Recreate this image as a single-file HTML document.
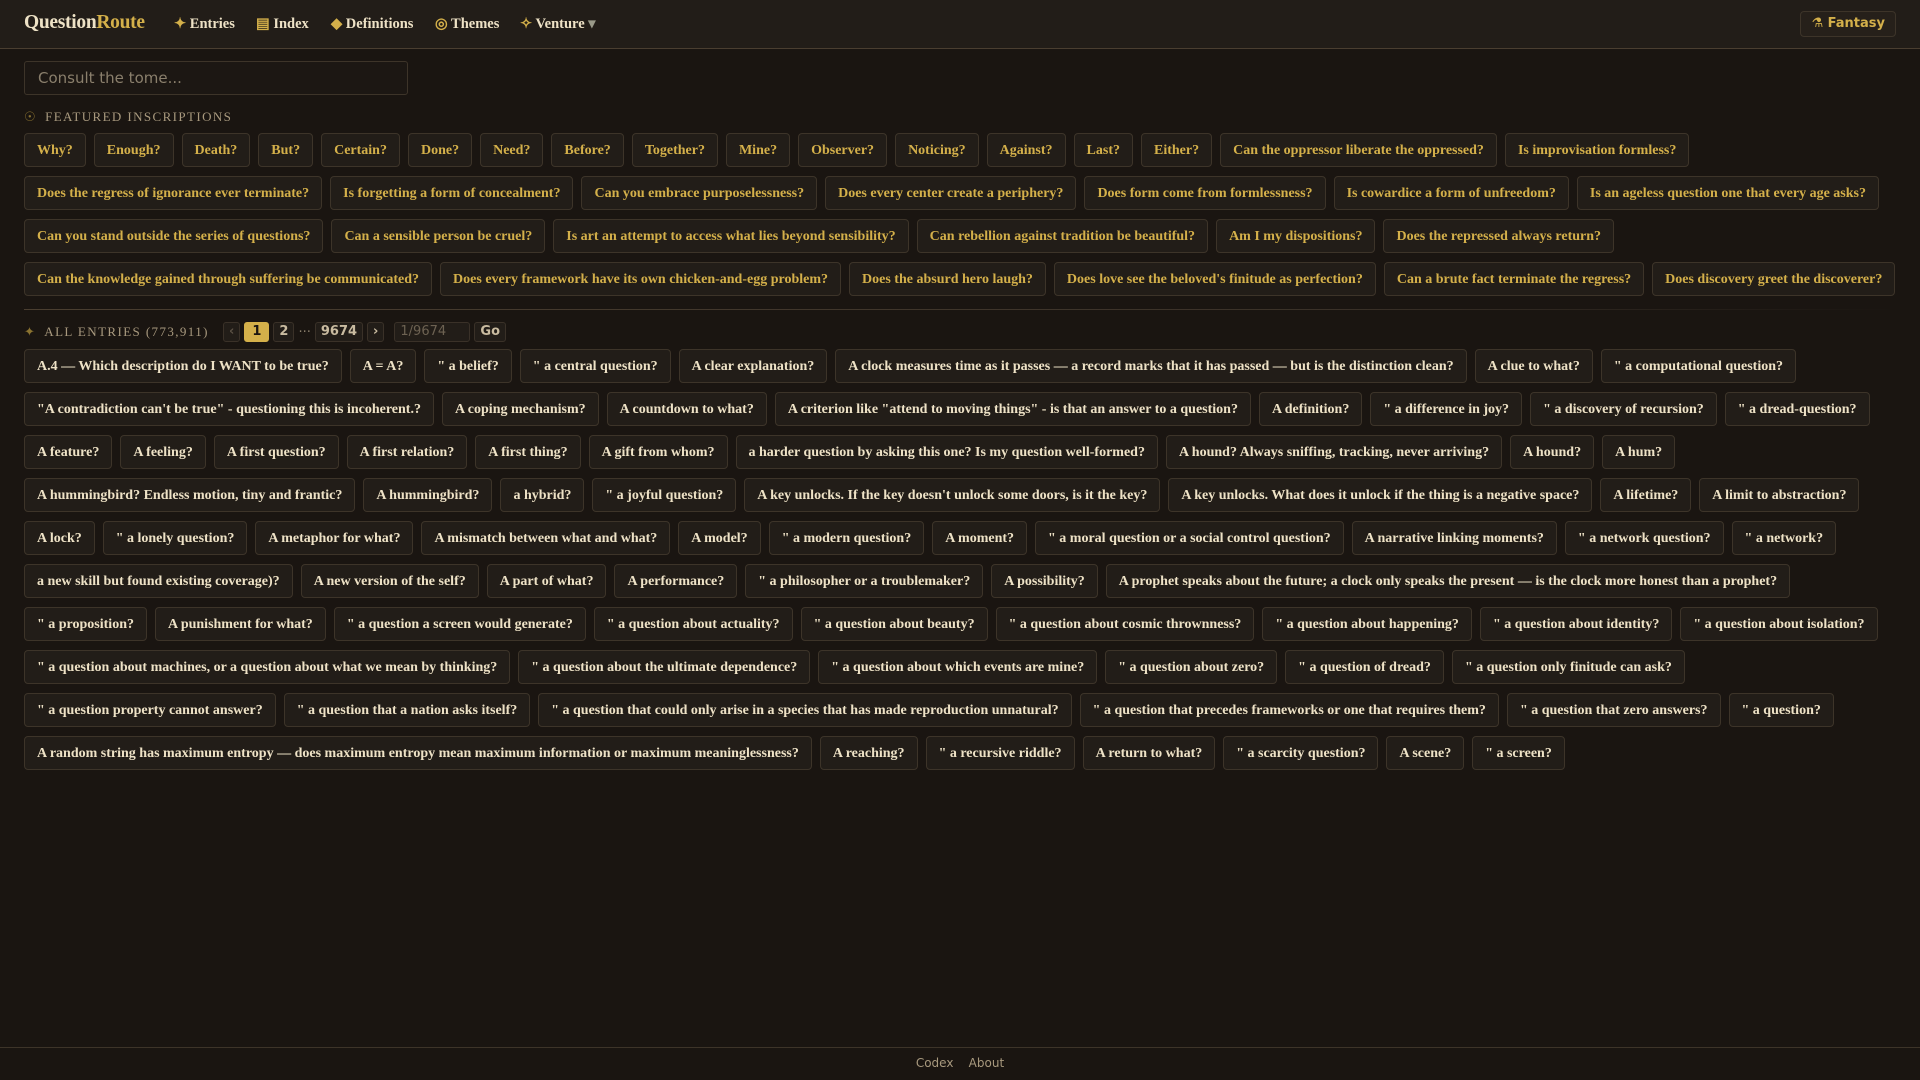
<!DOCTYPE html>
<html><head><meta charset="utf-8"><style>
*{box-sizing:border-box;margin:0;padding:0}
body{width:1920px;height:1080px;background:#1a1511;color:#e8dcc0;font-family:"Liberation Serif",serif;overflow:hidden;position:relative}
.nav{height:49px;background:#221d18;border-bottom:1px solid #4a3e30;position:relative}
.logo{position:absolute;left:24px;top:12px;font-size:19.5px;font-weight:bold;color:#eee2c6;letter-spacing:-0.3px}
.logo span{color:#d4b04a}
.nav a{position:absolute;top:16px;font-size:14.5px;font-weight:bold;color:#eee2c6;text-decoration:none;white-space:nowrap}
.nav a i{font-style:normal;color:#d4b04a}
.fant{position:absolute;right:24px;top:11px;height:26px;padding:0 10px;border:1px solid #3d3429;border-radius:4px;background:#26201a;color:#d4b04a;font:bold 13px "DejaVu Sans",sans-serif;line-height:24px}
.search{position:absolute;left:24px;top:61px;width:384px;height:34px;border:1px solid #3d3429;border-radius:3px;background:#1c1713;color:#8a7f6c;font:15px "DejaVu Sans",sans-serif;padding:7px 13px}
.h{position:absolute;left:24px;font-family:"Liberation Serif",serif;font-size:13px;letter-spacing:1.4px;color:#a8997e}
.h i{font-style:normal;color:#8a7230;margin-right:8px}
.rows{position:absolute;left:24px;width:1880px}
.row{display:flex;gap:8px;margin-bottom:9px;white-space:nowrap}
.b{height:34px;line-height:34px;padding:0 12px;border:1px solid #3d3429;border-radius:4px;background:#221d18;font-size:14px;font-weight:bold;color:#eee2c6}
.f .b{color:#d4b04a}
.div{position:absolute;left:24px;top:309px;width:1872px;height:1px;background:linear-gradient(90deg,#4a3e30,#3a3128 70%,transparent)}
.pg{position:absolute;left:223px;top:322px;display:flex;gap:4px;align-items:center;font:bold 13px "DejaVu Sans",sans-serif}
.pg span{height:20px;line-height:18px;padding:0 5px;border:1px solid #3a3128;border-radius:3px;background:#221d18;color:#c9bba0}
.pg .on{background:#d4b04a;color:#1a1511;border-color:#d4b04a;padding:0 7px}
.pg .in{width:76px;color:#6d6252;font-weight:normal;margin-left:6px}
.foot{position:absolute;left:0;top:1047px;width:1920px;height:33px;border-top:1px solid #3d3429;text-align:center;font:12px "DejaVu Sans",sans-serif;color:#a8997e;line-height:31px}
</style></head><body>
<div class="nav"><div class="logo">Question<span>Route</span></div>
<a style="left:174px"><i>✦</i> Entries</a><a style="left:256px"><i>▤</i> Index</a><a style="left:331px"><i>◆</i> Definitions</a><a style="left:435px"><i>◎</i> Themes</a><a style="left:520px"><i>✧</i> Venture <i style="color:#998">▾</i></a></div>
<div class="fant">⚗ Fantasy</div>
<div class="search">Consult the tome...</div>
<div class="h" style="top:109px"><i>☉</i>FEATURED INSCRIPTIONS</div>
<div class="rows f" style="top:133px">
<div class="row"><div class="b">Why?</div><div class="b">Enough?</div><div class="b">Death?</div><div class="b">But?</div><div class="b">Certain?</div><div class="b">Done?</div><div class="b">Need?</div><div class="b">Before?</div><div class="b">Together?</div><div class="b">Mine?</div><div class="b">Observer?</div><div class="b">Noticing?</div><div class="b">Against?</div><div class="b">Last?</div><div class="b">Either?</div><div class="b">Can the oppressor liberate the oppressed?</div><div class="b">Is improvisation formless?</div></div>
<div class="row"><div class="b">Does the regress of ignorance ever terminate?</div><div class="b">Is forgetting a form of concealment?</div><div class="b">Can you embrace purposelessness?</div><div class="b">Does every center create a periphery?</div><div class="b">Does form come from formlessness?</div><div class="b">Is cowardice a form of unfreedom?</div><div class="b">Is an ageless question one that every age asks?</div></div>
<div class="row"><div class="b">Can you stand outside the series of questions?</div><div class="b">Can a sensible person be cruel?</div><div class="b">Is art an attempt to access what lies beyond sensibility?</div><div class="b">Can rebellion against tradition be beautiful?</div><div class="b">Am I my dispositions?</div><div class="b">Does the repressed always return?</div></div>
<div class="row"><div class="b">Can the knowledge gained through suffering be communicated?</div><div class="b">Does every framework have its own chicken-and-egg problem?</div><div class="b">Does the absurd hero laugh?</div><div class="b">Does love see the beloved's finitude as perfection?</div><div class="b">Can a brute fact terminate the regress?</div><div class="b">Does discovery greet the discoverer?</div></div>
</div>
<div class="div"></div>
<div class="h" style="top:324px"><i>✦</i>ALL ENTRIES (773,911)</div>
<div class="pg"><span style="color:#5a5044">‹</span><span class="on">1</span><span>2</span><b style="color:#8a7f6c;font-weight:normal">···</b><span>9674</span><span>›</span><span class="in">1/9674</span><span>Go</span></div>
<div class="rows" style="top:349px">
<div class="row"><div class="b">A.4 — Which description do I WANT to be true?</div><div class="b">A = A?</div><div class="b">" a belief?</div><div class="b">" a central question?</div><div class="b">A clear explanation?</div><div class="b">A clock measures time as it passes — a record marks that it has passed — but is the distinction clean?</div><div class="b">A clue to what?</div><div class="b">" a computational question?</div></div>
<div class="row"><div class="b">"A contradiction can't be true" - questioning this is incoherent.?</div><div class="b">A coping mechanism?</div><div class="b">A countdown to what?</div><div class="b">A criterion like "attend to moving things" - is that an answer to a question?</div><div class="b">A definition?</div><div class="b">" a difference in joy?</div><div class="b">" a discovery of recursion?</div><div class="b">" a dread-question?</div></div>
<div class="row"><div class="b">A feature?</div><div class="b">A feeling?</div><div class="b">A first question?</div><div class="b">A first relation?</div><div class="b">A first thing?</div><div class="b">A gift from whom?</div><div class="b">a harder question by asking this one? Is my question well-formed?</div><div class="b">A hound? Always sniffing, tracking, never arriving?</div><div class="b">A hound?</div><div class="b">A hum?</div></div>
<div class="row"><div class="b">A hummingbird? Endless motion, tiny and frantic?</div><div class="b">A hummingbird?</div><div class="b">a hybrid?</div><div class="b">" a joyful question?</div><div class="b">A key unlocks. If the key doesn't unlock some doors, is it the key?</div><div class="b">A key unlocks. What does it unlock if the thing is a negative space?</div><div class="b">A lifetime?</div><div class="b">A limit to abstraction?</div></div>
<div class="row"><div class="b">A lock?</div><div class="b">" a lonely question?</div><div class="b">A metaphor for what?</div><div class="b">A mismatch between what and what?</div><div class="b">A model?</div><div class="b">" a modern question?</div><div class="b">A moment?</div><div class="b">" a moral question or a social control question?</div><div class="b">A narrative linking moments?</div><div class="b">" a network question?</div><div class="b">" a network?</div></div>
<div class="row"><div class="b">a new skill but found existing coverage)?</div><div class="b">A new version of the self?</div><div class="b">A part of what?</div><div class="b">A performance?</div><div class="b">" a philosopher or a troublemaker?</div><div class="b">A possibility?</div><div class="b">A prophet speaks about the future; a clock only speaks the present — is the clock more honest than a prophet?</div></div>
<div class="row"><div class="b">" a proposition?</div><div class="b">A punishment for what?</div><div class="b">" a question a screen would generate?</div><div class="b">" a question about actuality?</div><div class="b">" a question about beauty?</div><div class="b">" a question about cosmic thrownness?</div><div class="b">" a question about happening?</div><div class="b">" a question about identity?</div><div class="b">" a question about isolation?</div></div>
<div class="row"><div class="b">" a question about machines, or a question about what we mean by thinking?</div><div class="b">" a question about the ultimate dependence?</div><div class="b">" a question about which events are mine?</div><div class="b">" a question about zero?</div><div class="b">" a question of dread?</div><div class="b">" a question only finitude can ask?</div></div>
<div class="row"><div class="b">" a question property cannot answer?</div><div class="b">" a question that a nation asks itself?</div><div class="b">" a question that could only arise in a species that has made reproduction unnatural?</div><div class="b">" a question that precedes frameworks or one that requires them?</div><div class="b">" a question that zero answers?</div><div class="b">" a question?</div></div>
<div class="row"><div class="b">A random string has maximum entropy — does maximum entropy mean maximum information or maximum meaninglessness?</div><div class="b">A reaching?</div><div class="b">" a recursive riddle?</div><div class="b">A return to what?</div><div class="b">" a scarcity question?</div><div class="b">A scene?</div><div class="b">" a screen?</div></div>
</div>
<div class="foot">Codex &nbsp;&nbsp;&nbsp;About</div>
</body></html>
